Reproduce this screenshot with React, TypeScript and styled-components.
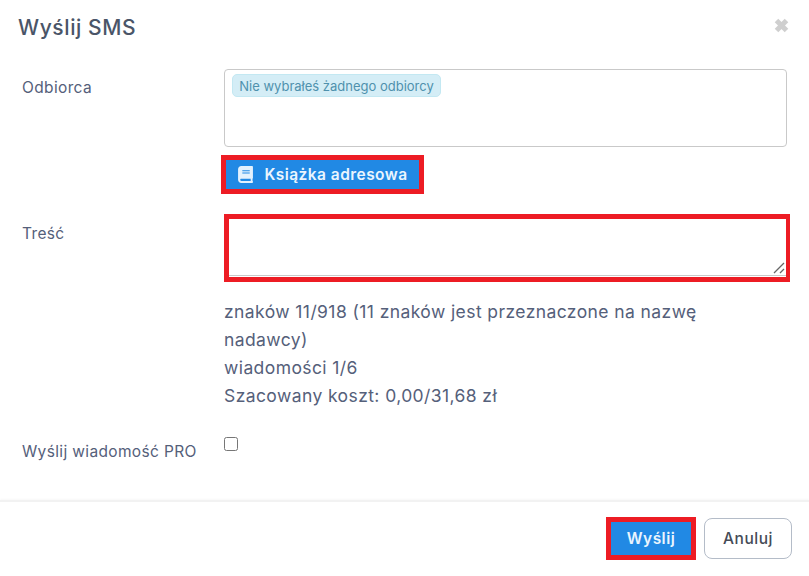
import React from "react";
import styled, { createGlobalStyle } from "styled-components";
import { FaBook } from "react-icons/fa";

const Global = createGlobalStyle`
  html, body { margin: 0; padding: 0; background: #fff; }
  body { font-family: Inter, "Open Sans", "Liberation Sans", sans-serif; color: #4f5b70; }
  * { box-sizing: border-box; }
`;
const Modal = styled.div`
  width: 809px; height: 576px; display: flex; flex-direction: column; background: #fff; overflow: hidden;
`;
const Header = styled.header`
  height: 69px; padding: 14px 20px 0 18px; display: flex; justify-content: space-between; align-items: flex-start;
`;
const Title = styled.h1`
  margin: 0; font-size: 21px; line-height: 28px; font-weight: 500; letter-spacing: 0.6px; color: #4a5568;
`;
const Close = styled.svg`
  width: 15px; height: 15px; margin-top: 4px;
`;
const Body = styled.div`
  height: 431px; padding: 0 19px 0 22px; display: flex; flex-direction: column;
`;
const Row = styled.div<{ $h: number }>`
  display: grid; grid-template-columns: 202px 1fr; height: ${p => p.$h}px;
`;
const Label = styled.label<{ $top: number }>`
  padding-top: ${p => p.$top}px; font-size: 15.5px; line-height: 20px; letter-spacing: 0.35px; color: #55607a; white-space: nowrap;
`;
const Field = styled.div`
  display: flex; flex-direction: column; align-items: flex-start; min-width: 0;
`;
const RecipientBox = styled.div`
  width: 563px; height: 78px; padding: 4px 7px; border: 1px solid #c9c9c9; border-radius: 4px;
`;
const Badge = styled.span`
  display: inline-flex; align-items: center; height: 23px; width: 209px; justify-content: center;
  background: #d4edf6; border: 1px solid #c3e8f2; border-radius: 5px;
  color: #4f91ad; font-size: 13px; white-space: nowrap;
`;
const Outlined = styled.div<{ $m: string }>`
  border: 5px solid #ed1c24; margin: ${p => p.$m}; display: flex;
`;
const PrimaryButton = styled.button<{ $w: number; $h: number }>`
  width: ${p => p.$w}px; height: ${p => p.$h}px; padding: 0; border: 0; background: #2189e4; color: #eaf5fe;
  font: 600 15.5px Inter, "Open Sans", sans-serif; letter-spacing: 0.45px;
  display: flex; align-items: center; justify-content: center; gap: 10px;
  svg { font-size: 17px; color: #e3f1fd; }
`;
const TextOutline = styled.div`
  width: 566px; height: 68px; border: 5px solid #ed1c24; border-right-width: 4px; display: flex;
`;
const Message = styled.div`
  position: relative; flex: 1; background: #fff; margin-bottom: 1px; border-bottom: 1px solid #c9c9c9;
`;
const Grip = styled.svg`
  position: absolute; right: 1px; bottom: 1px; width: 12px; height: 12px;
`;
const Counter = styled.div`
  margin-top: 16px; font-size: 17.5px; line-height: 28px; letter-spacing: 0.41px; color: #55607a; width: 500px;
`;
const Check = styled.input`
  appearance: none; width: 14px; height: 14px; margin: 0; border: 1px solid #767676; border-radius: 2.5px; background: #fff;
`;
const Footer = styled.footer`
  flex: 1; border-top: 2px solid #f2f2f2; box-shadow: 0 -1px 2px #f8f8f8; padding: 15px 17px 0 0;
  display: flex; justify-content: flex-end; align-items: flex-start; gap: 8px;
`;
const Cancel = styled.button`
  width: 88px; height: 41px; margin-top: 1px; border: 1px solid #b4bcc8; border-radius: 8px; background: #fff; color: #454b57;
  font: 500 15.5px Inter, "Open Sans", sans-serif; letter-spacing: 0.5px; padding: 0;
`;

export default function App() {
  return (
    <Modal>
      <Global />
      <Header>
        <Title>Wyślij SMS</Title>
        <Close viewBox="0 0 15 15"><path d="M2.5 2.5 12.5 12.5M12.5 2.5 2.5 12.5" stroke="#cfcfcf" strokeWidth="5" fill="none" /></Close>
      </Header>
      <Body>
        <Row $h={145}>
          <Label $top={9}>Odbiorca</Label>
          <Field>
            <RecipientBox><Badge>Nie wybrałeś żadnego odbiorcy</Badge></RecipientBox>
            <Outlined $m="8px 0 0 -3px">
              <PrimaryButton $w={193} $h={29}><FaBook />Książka adresowa</PrimaryButton>
            </Outlined>
          </Field>
        </Row>
        <Row $h={223}>
          <Label $top={10}>Treść</Label>
          <Field>
            <TextOutline>
              <Message>
                <Grip viewBox="0 0 12 12"><path d="M1 11 11 1M7 11l4-4" stroke="#666" strokeWidth="1.3" fill="none" /></Grip>
              </Message>
            </TextOutline>
            <Counter>
              znaków 11/918 (11 znaków jest przeznaczone na nazwę nadawcy)<br />
              wiadomości 1/6<br />
              Szacowany koszt: 0,00/31,68 zł
            </Counter>
          </Field>
        </Row>
        <Row $h={63}>
          <Label $top={5}>Wyślij wiadomość PRO</Label>
          <Field><Check type="checkbox" /></Field>
        </Row>
      </Body>
      <Footer>
        <Outlined $m="0">
          <PrimaryButton $w={80} $h={33}>Wyślij</PrimaryButton>
        </Outlined>
        <Cancel>Anuluj</Cancel>
      </Footer>
    </Modal>
  );
}
